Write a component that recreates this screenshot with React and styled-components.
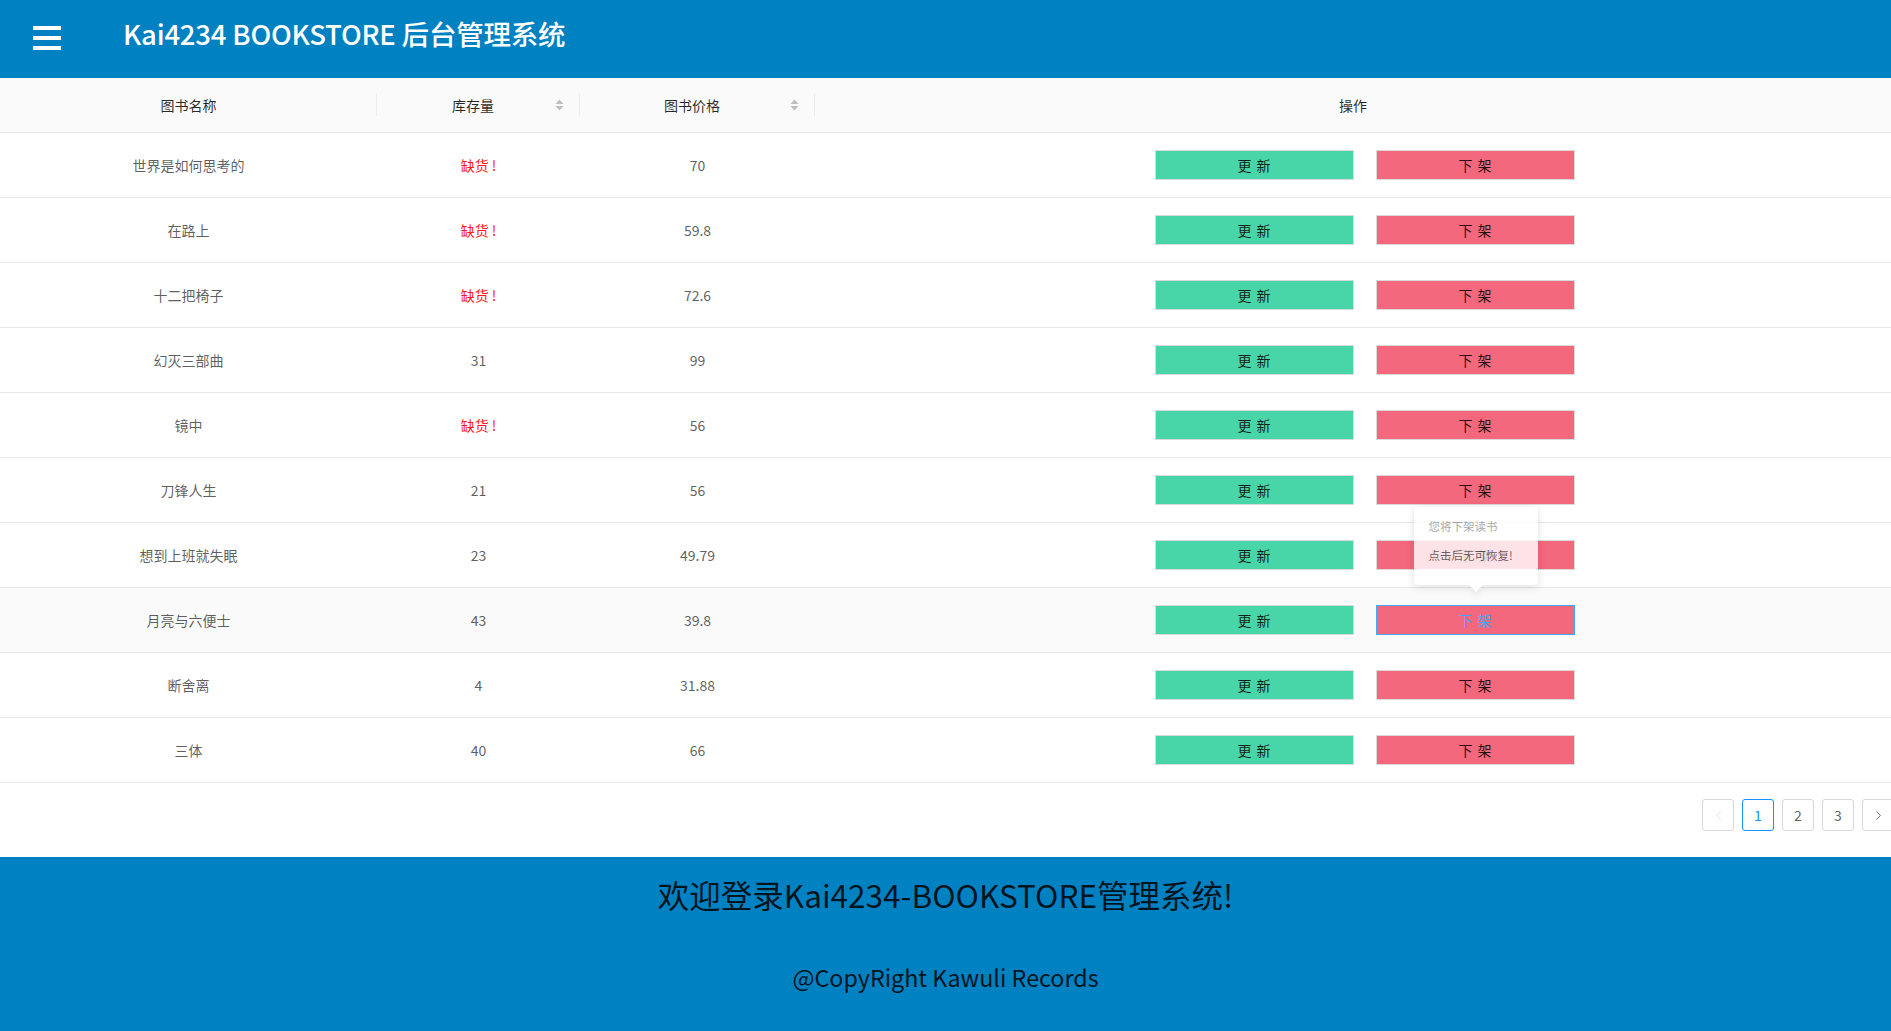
import React from "react";
import styled, { createGlobalStyle, css } from "styled-components";
import { ChevronLeft, ChevronRight } from "lucide-react";

const Global = createGlobalStyle`
  html, body { margin: 0; padding: 0; overflow-x: hidden; background: #fff; }
  body { font-family: "Noto Sans CJK SC", "Noto Sans", sans-serif; font-size: 14px; }
  * { box-sizing: border-box; }
`;

const BLUE = "#0081c2";

const Page = styled.div`
  width: 1891px;
  min-height: 100vh;
  display: flex;
  flex-direction: column;
`;

const Header = styled.header`
  height: 78px;
  flex: none;
  background: ${BLUE};
  display: flex;
  align-items: flex-start;
  padding-left: 33px;
`;

const Burger = styled.svg`
  margin-top: 26px;
  width: 28px;
  height: 24px;
  flex: none;
`;

const Title = styled.h1`
  margin: 12px 0 0 62px;
  font-size: 27.5px;
  line-height: 42px;
  font-weight: 500;
  color: #fff;
  letter-spacing: -0.2px;
`;

const COLS = "377px 203px 235px 1fr";

const HeadRow = styled.div`
  display: grid;
  grid-template-columns: ${COLS};
  height: 55px;
  background: #fafafa;
  border-bottom: 1px solid #e8e8e8;
`;

const HeadCell = styled.div`
  position: relative;
  display: flex;
  align-items: center;
  padding: 0 16px;
  color: rgba(0, 0, 0, 0.85);
  font-size: 14px;
  ${(p) =>
    p.$sep &&
    css`
      &::after {
        content: "";
        position: absolute;
        right: 0;
        top: 50%;
        width: 1px;
        height: 22px;
        margin-top: -11px;
        background: #ececec;
      }
    `}
`;

const HeadTitle = styled.span`
  flex: 1;
  text-align: center;
`;

const SorterIcon = styled.svg`
  width: 9px;
  height: 12px;
  flex: none;
  margin-left: 2px;
`;

const Row = styled.div`
  display: grid;
  grid-template-columns: ${COLS};
  height: 65px;
  border-bottom: 1px solid #e8e8e8;
  background: ${(p) => (p.$hover ? "#fafafa" : "#fff")};
  align-items: center;
`;

const Cell = styled.div`
  text-align: center;
  padding: 0 16px;
  font-size: 14px;
  font-weight: 400;
  color: ${(p) => (p.$warn ? "#ff1a1a" : "rgba(0, 0, 0, 0.65)")};
`;

const Ops = styled.div`
  display: flex;
  justify-content: center;
  align-items: center;
  gap: 22px;
  padding-left: 24px;
`;

const BtnWrap = styled.div`
  position: relative;
`;

const Btn = styled.button`
  width: 199px;
  height: 30px;
  border: 1px solid ${(p) => (p.$focus ? "#40a9ff" : "#d9d9d9")};
  background: ${(p) => (p.$kind === "ok" ? "#48d6a8" : "#f4687d")};
  color: ${(p) => (p.$focus ? "#40a9ff" : "rgba(0, 0, 0, 0.85)")};
  font-family: inherit;
  font-size: 14px;
  letter-spacing: 1px;
  padding: 0;
  cursor: pointer;
`;

const Pop = styled.div`
  position: absolute;
  left: 50%;
  bottom: calc(100% + 20px);
  transform: translateX(-50%);
  width: 124px;
  height: 78px;
  background: #fff;
  box-shadow: 0 2px 8px rgba(0, 0, 0, 0.15);
  border-radius: 4px;
  opacity: 0.82;
  padding: 10px 15px;
  z-index: 5;
`;

const PopArrow = styled.div`
  position: absolute;
  left: 50%;
  bottom: -5px;
  width: 10px;
  height: 10px;
  margin-left: -5px;
  background: #fff;
  transform: rotate(45deg);
  box-shadow: 3px 3px 7px rgba(0, 0, 0, 0.07);
`;

const PopLine = styled.div`
  position: relative;
  font-size: 11.5px;
  line-height: 18px;
  white-space: nowrap;
  color: ${(p) => (p.$strong ? "#595959" : "#999")};
  margin-top: ${(p) => (p.$strong ? "11px" : "0")};
`;

const Pager = styled.div`
  display: flex;
  justify-content: flex-end;
  gap: 8px;
  margin: 16px -3px 26px 0;
`;

const PageItem = styled.div`
  width: 32px;
  height: 32px;
  border: 1px solid ${(p) => (p.$active ? "#1890ff" : "#d9d9d9")};
  border-radius: 3px;
  display: flex;
  align-items: center;
  justify-content: center;
  font-size: 14px;
  color: ${(p) => (p.$active ? "#1890ff" : p.$disabled ? "#d9d9d9" : "rgba(0, 0, 0, 0.65)")};
  background: #fff;
`;

const Footer = styled.footer`
  background: ${BLUE};
  flex: 1;
  min-height: 173px;
  display: flex;
  flex-direction: column;
  align-items: center;
  padding-top: 15px;
  color: rgba(0, 0, 0, 0.85);
`;

const FootTitle = styled.div`
  font-size: 31.5px;
  line-height: 44px;
`;

const Copy = styled.div`
  margin-top: 45px;
  font-size: 23.3px;
  line-height: 32px;
`;

const books = [
  ["世界是如何思考的", null, "70"],
  ["在路上", null, "59.8"],
  ["十二把椅子", null, "72.6"],
  ["幻灭三部曲", "31", "99"],
  ["镜中", null, "56"],
  ["刀锋人生", "21", "56"],
  ["想到上班就失眠", "23", "49.79"],
  ["月亮与六便士", "43", "39.8"],
  ["断舍离", "4", "31.88"],
  ["三体", "40", "66"],
];

const Sorter = () => (
  <SorterIcon viewBox="0 0 9 12">
    <path d="M4.5 0.5 L8.5 5 L0.5 5 Z" fill="#bfbfbf" />
    <path d="M4.5 11.5 L8.5 7 L0.5 7 Z" fill="#bfbfbf" />
  </SorterIcon>
);

export default function App() {
  return (
    <Page>
      <Global />
      <Header>
        <Burger viewBox="0 0 28 24">
          <rect x="0" y="0" width="28" height="4" fill="#fff" />
          <rect x="0" y="10" width="28" height="4" fill="#fff" />
          <rect x="0" y="20" width="28" height="4" fill="#fff" />
        </Burger>
        <Title>Kai4234 BOOKSTORE 后台管理系统</Title>
      </Header>

      <HeadRow>
        <HeadCell $sep>
          <HeadTitle>图书名称</HeadTitle>
        </HeadCell>
        <HeadCell $sep>
          <HeadTitle>库存量</HeadTitle>
          <Sorter />
        </HeadCell>
        <HeadCell $sep>
          <HeadTitle>图书价格</HeadTitle>
          <Sorter />
        </HeadCell>
        <HeadCell>
          <HeadTitle>操作</HeadTitle>
        </HeadCell>
      </HeadRow>

      {books.map(([name, stock, price], i) => (
        <Row key={name} $hover={i === 7}>
          <Cell>{name}</Cell>
          <Cell $warn={!stock}>{stock || "缺货 !"}</Cell>
          <Cell>{price}</Cell>
          <Ops>
            <Btn $kind="ok">更 新</Btn>
            <BtnWrap>
              <Btn $kind="del" $focus={i === 7}>下 架</Btn>
              {i === 7 && (
                <Pop>
                  <PopArrow />
                  <PopLine>您将下架读书</PopLine>
                  <PopLine $strong>点击后无可恢复!</PopLine>
                </Pop>
              )}
            </BtnWrap>
          </Ops>
        </Row>
      ))}

      <Pager>
        <PageItem $disabled>
          <ChevronLeft size={15} strokeWidth={1.4} />
        </PageItem>
        <PageItem $active>1</PageItem>
        <PageItem>2</PageItem>
        <PageItem>3</PageItem>
        <PageItem>
          <ChevronRight size={15} strokeWidth={1.4} />
        </PageItem>
      </Pager>

      <Footer>
        <FootTitle>欢迎登录Kai4234-BOOKSTORE管理系统!</FootTitle>
        <Copy>@CopyRight Kawuli Records</Copy>
      </Footer>
    </Page>
  );
}
